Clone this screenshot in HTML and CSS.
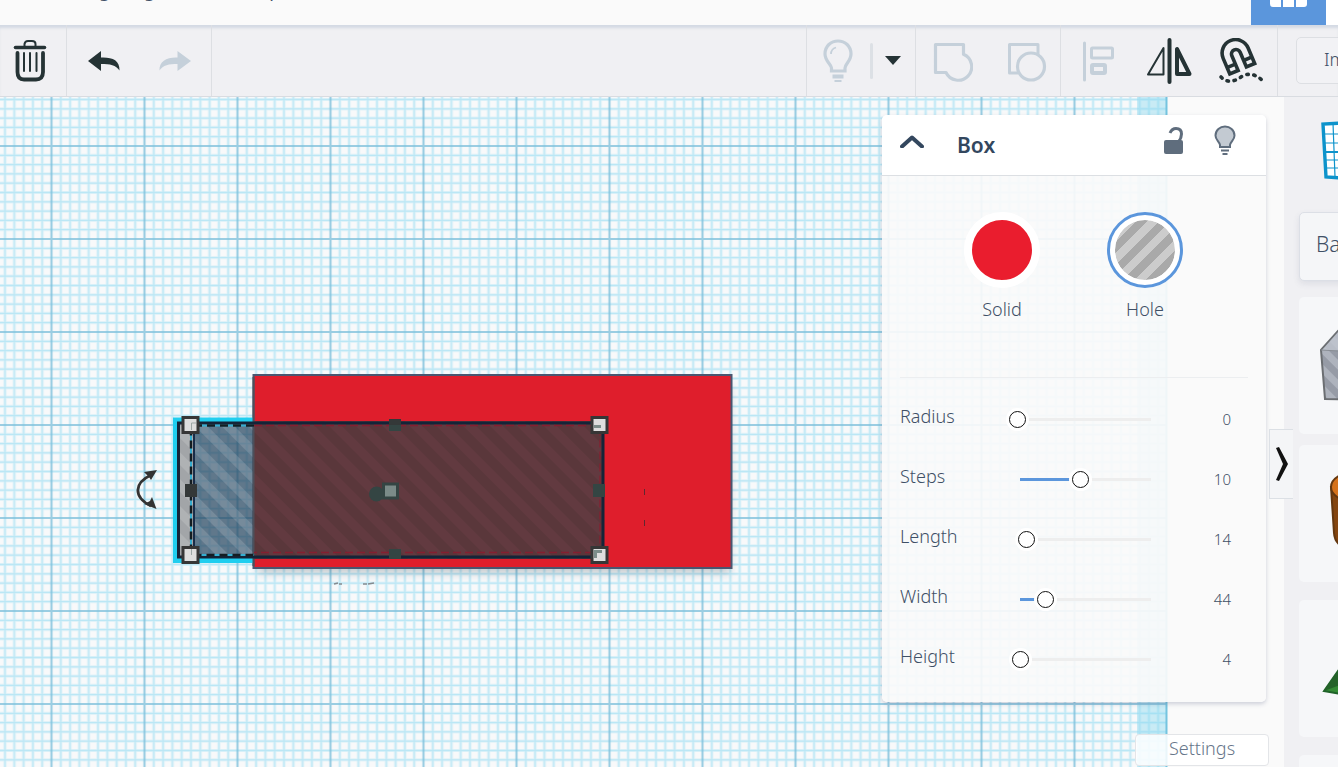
FILE: index.html
```html
<!DOCTYPE html>
<html lang="en">
<head>
<meta charset="utf-8">
<title>3D design editor</title>
<link rel="stylesheet" href="styles.css">
</head>
<body>
<div class="app">
  <header class="topbar">
    <div class="project"><span>g</span><span>g</span><span>p</span></div>
    <button class="view-tab" aria-label="Blocks view"><svg width="38" height="24" viewBox="0 0 38 24"><path d="M0 0H11V23H3Q0 23 0 20ZM13 0H24V23H13ZM26 0H37V20Q37 23 34 23H26Z" fill="#fff"/></svg></button>
    <div class="topbar-end"></div>
  </header>

  <div class="toolbar">
    <div class="group group-trash">
      <button class="tool" aria-label="Delete"><svg width="34" height="44" viewBox="0 0 34 44" fill="none" stroke="#253335" stroke-linecap="round"><path d="M2.500 8.500H31.500" stroke-width="3.600"/><path d="M11.500 7V5Q12 2 15 2H19Q22.500 2 22.500 5V7" stroke-width="2"/><path d="M4.500 14V33Q4.500 40.500 11 40.500H23Q30 40.500 30 33V14" stroke-width="3.800"/><path d="M11 14V32M17 14V32M23.500 14V32" stroke-width="2"/></svg></button>
    </div>
    <div class="group group-history">
      <button class="tool" aria-label="Undo"><svg width="34" height="22" viewBox="0 0 34 22"><path d="M1 11L14 1V7.500C25 7 33 10 32.500 20.500C29 15 23 14 14 14V21Z" fill="#253335"/></svg></button>
      <button class="tool" aria-label="Redo"><svg width="34" height="22" viewBox="0 0 34 22"><path d="M33 11L19.500 1V7.500C9 7 1 11 1.500 20.500C5 15 11 14 19.500 14V21Z" fill="#c5d0da"/></svg></button>
    </div>
    <div class="group group-show">
      <button class="tool" aria-label="Show all"><svg width="30" height="44" viewBox="0 0 30 44" fill="none" stroke="#c5d0da"><path d="M8.500 32V29C8 25 2 22 2 15C2 7 8 2 15 2S28 7 28 15C28 22 22 25 22 29V32Z" stroke-width="3.200"/><path d="M8 15Q8 10 13 8.500" stroke-width="1.800"/><path d="M9.500 37.500H20.500" stroke-width="4"/><path d="M11.500 42H18.500" stroke-width="2"/></svg></button>
      <span class="divider"></span>
      <button class="tool" aria-label="Visibility options"><svg width="16" height="9" viewBox="0 0 16 9"><path d="M0 0H16L8 9Z" fill="#253335"/></svg></button>
    </div>
    <div class="group group-combine">
      <button class="tool" aria-label="Group"><svg width="40" height="40" viewBox="0 0 40 40" fill="none" stroke="#c5d0da" stroke-width="3.200"><path d="M2.500 2.500H30.500V12.300A13.500 13.500 0 1 1 13 30.500H2.500Z" stroke-linejoin="round"/></svg></button>
      <button class="tool" aria-label="Ungroup"><svg width="40" height="40" viewBox="0 0 40 40" fill="none" stroke="#c5d0da"><path d="M11 31H2.500V2.500H31V13" stroke-width="3" stroke-linejoin="round"/><circle cx="24" cy="24.500" r="13.500" stroke-width="3.200"/></svg></button>
    </div>
    <div class="group group-arrange">
      <button class="tool" aria-label="Align"><svg width="32" height="42" viewBox="0 0 32 42" fill="none" stroke="#c5d0da"><path d="M2.500 3V40" stroke-width="3" stroke-linecap="round"/><rect x="9.500" y="8" width="21" height="10" stroke-width="3" rx="1"/><rect x="10" y="25" width="13" height="8" stroke-width="4" rx="1"/></svg></button>
      <button class="tool" aria-label="Mirror"><svg width="46" height="48" viewBox="0 0 46 48" fill="none" stroke="#253335" stroke-linejoin="round"><path d="M17.500 11V37.500H2Z" stroke-width="2"/><path d="M23.500 3V45" stroke-width="4" stroke-linecap="round"/><path d="M31 12V37H43.500Z" stroke-width="4"/></svg></button>
      <button class="tool" aria-label="Snap"><svg width="46" height="46" viewBox="0 0 46 46" fill="none" stroke="#253335"><g transform="rotate(-23 18 16)" stroke-width="3.600"><path d="M4.500 32V15A13.500 13.500 0 0 1 31.500 15V32H22.500V16A4.500 4.500 0 0 0 13.500 16V32Z"/><path d="M5 25H13.500M22.500 25H31"/></g><path d="M3 39C10 46 17 43 23 39S36 35 44 42" stroke-width="3.600" stroke-linecap="round" stroke-dasharray="1.500 5.600"/></svg></button>
    </div>
    <div class="group group-import"><button class="import">Import</button></div>
  </div>

  <main class="main">
    <section class="workspace">
      <svg class="canvas" aria-label="Workplane">
        <defs>
          <pattern id="grid" x="51.500" y="49" width="93" height="93" patternUnits="userSpaceOnUse">
            <g stroke="#89d9f2" stroke-opacity=".2" stroke-width="3.200"><path id="minor" d="M9.300 0V93M18.600 0V93M27.900 0V93M37.200 0V93M46.500 0V93M55.800 0V93M65.100 0V93M74.400 0V93M83.700 0V93M0 9.300H93M0 18.600H93M0 27.900H93M0 37.200H93M0 46.500H93M0 55.800H93M0 65.100H93M0 74.400H93M0 83.700H93"/></g>
            <g stroke="#8cdaf2" stroke-opacity=".45" stroke-width="1.300"><path d="M9.300 0V93M18.600 0V93M27.900 0V93M37.200 0V93M46.500 0V93M55.800 0V93M65.100 0V93M74.400 0V93M83.700 0V93M0 9.300H93M0 18.600H93M0 27.900H93M0 37.200H93M0 46.500H93M0 55.800H93M0 65.100H93M0 74.400H93M0 83.700H93"/></g>
            <path d="M0 0V93M93 0V93M0 0H93M0 93H93" stroke="#82c2dc" stroke-width="2.200" stroke-opacity=".8"/>
          </pattern>
          <pattern id="hole" width="19" height="19" patternUnits="userSpaceOnUse" patternTransform="rotate(-45)"><rect width="9" height="19" fill="#fff" fill-opacity=".14"/></pattern>
          <pattern id="holeDark" width="19" height="19" patternUnits="userSpaceOnUse" patternTransform="rotate(-45)"><rect width="9" height="19" fill="#623a40"/></pattern>
          <filter id="soft" x="-10%" y="-10%" width="120%" height="130%"><feGaussianBlur stdDeviation="5"/></filter>
        </defs>
        <rect width="1167" height="100%" fill="#f8f9fa"/>
        <rect x="1137" width="30" height="100%" fill="#c9ebf5"/>
        <rect width="1167" height="100%" fill="url(#grid)"/>
        <path d="M1166.500 0V700" stroke="#75c4df" stroke-width="2"/>
        <rect x="258" y="288" width="472" height="188" fill="#345" opacity=".28" filter="url(#soft)"/>
        <rect x="253.500" y="278" width="478" height="193" fill="#df1e2c" stroke="#4a5670" stroke-width="2"/>
        <path d="M253 323H175.500V463.500H253" fill="none" stroke="#20ceef" stroke-width="5"/>
        <rect x="178" y="325" width="16" height="136" fill="#a2a5a8"/>
        <rect x="194" y="325" width="60" height="136" fill="#254560" fill-opacity=".72"/>
        <rect x="178" y="325" width="76" height="136" fill="url(#hole)"/>
        <rect x="254" y="324" width="349" height="138" fill="#5a373b"/>
        <rect x="254" y="324" width="349" height="138" fill="url(#holeDark)"/>
        <path d="M253.500 280V469" stroke="#4d505b" stroke-width="2"/>
        <rect x="178.500" y="326" width="424.500" height="134" fill="none" stroke="#152438" stroke-width="3"/>
        <path d="M194 327V459" stroke="#182c48" stroke-width="2"/>
        <path d="M254 328.500H191V458H254" fill="none" stroke="#35add0" stroke-width="2"/>
        <path d="M254 328.500H191V458H254" fill="none" stroke="#141d22" stroke-width="2.500" stroke-dasharray="8 5"/>
        <path d="M254 328.500H600V455.500H254" fill="none" stroke="#851f30" stroke-width="1.300" stroke-dasharray="8 4"/>
        <g fill="#dedede" stroke="#363636" stroke-width="3"><rect x="183" y="320.500" width="15" height="15"/><rect x="183" y="450.500" width="15" height="15"/><rect x="592" y="320.500" width="15" height="15"/><rect x="592" y="450.500" width="15" height="15"/></g>
        <path d="M191.500 333V326H196M191.500 452V458" fill="none" stroke="#9da7a6"/>
        <path d="M594 328H601V331H594ZM594 453H602V456H597V461H594Z" fill="#7c8d8a"/>
        <path d="M185 387H197V400H185ZM389 322H401V328H389Z" fill="#343838"/>
        <path d="M389 328H401V334H389ZM389 452H401V462H389ZM593 387H605V400H593Z" fill="#344543"/>
        <circle cx="376.500" cy="397" r="7.500" fill="#344543"/><rect x="383.500" y="387" width="14" height="14" fill="#7b8b88" stroke="#344543" stroke-width="3"/>
        <path d="M151 378C134 386 133 400 151 409" fill="none" stroke="#333" stroke-width="2.800"/><path d="M144 375L157 373L151 383L149 380ZM144 407L150 404L152 400L156.500 412Z" fill="#333"/>
        <path d="M644.500 392V398M644.500 423V429" stroke="#602831"/>
        <path d="M334 487L338 486M339 487H342M363 487H367M368 487L374 486" stroke="#858b90" stroke-width="1.500"/>
      </svg>

      <aside class="inspector">
        <div class="inspector-head">
          <button class="tool" aria-label="Collapse"><svg width="24" height="14" viewBox="0 0 24 14"><path d="M2 12.500L12 3.500L22 12.500" fill="none" stroke="#33475e" stroke-width="4" stroke-linecap="round" stroke-linejoin="round"/></svg></button>
          <h2 class="inspector-title">Box</h2>
          <button class="tool" aria-label="Lock"><svg width="20" height="28" viewBox="0 0 20 28"><rect y="13" width="19" height="14" rx="2" fill="#5f6d7d"/><path d="M6 6Q8 1.500 12 1.500Q17.500 1.500 17.500 7Q17.500 11 14.500 15" fill="none" stroke="#5f6d7d" stroke-width="3"/></svg></button>
          <button class="tool" aria-label="Hide"><svg width="22" height="31" viewBox="0 0 22 31"><path d="M6 22V20C5 16 1.500 15 1.500 10.500C1.500 5 6 1.500 11 1.500S20.500 5 20.500 10.500C20.500 15 17 16 16 20V22Z" fill="#c3cad2" stroke="#5f6d7d" stroke-width="2"/><path d="M7 25.500H15M8.500 29H13.500" stroke="#5f6d7d" stroke-width="2"/></svg></button>
        </div>
        <div class="materials">
          <button class="material"><span class="swatch solid"></span>Solid</button>
          <button class="material"><span class="swatch hole selected"></span>Hole</button>
        </div>
        <div class="params">
          <div class="param"><label for="radius">Radius</label><input class="range" id="radius" type="range" min="0" max="100" value="0" style="--fill:0px"><output for="radius">0</output></div>
          <div class="param"><label for="steps">Steps</label><input class="range" id="steps" type="range" min="0" max="100" value="50" style="--fill:58px"><output for="steps">10</output></div>
          <div class="param"><label for="length">Length</label><input class="range" id="length" type="range" min="0" max="100" value="7" style="--fill:0px"><output for="length">14</output></div>
          <div class="param"><label for="width">Width</label><input class="range" id="width" type="range" min="0" max="100" value="22" style="--fill:24px"><output for="width">44</output></div>
          <div class="param"><label for="height">Height</label><input class="range" id="height" type="range" min="0" max="100" value="2" style="--fill:0px"><output for="height">4</output></div>
        </div>
      </aside>
      <button class="settings">Settings</button>
      <button class="drawer" aria-label="Toggle shapes panel"><svg width="12" height="34" viewBox="0 0 12 34"><path d="M0 1L3 0L12 17L3 34L0 33L7 17Z" fill="#111"/></svg></button>
    </section>

    <nav class="shapes">
      <button class="workplane" aria-label="Workplane"><svg width="60" height="62" viewBox="0 0 60 62" fill="none" stroke="#0d93cb"><path d="M58 0L2 3L5 56L58 59Z" fill="#fff" stroke-width="3.400"/><path d="M12 2L14 56M4 13H58M4 22H58M4 39H58M4 47H58" stroke-width="1.200"/><path d="M4 31H58" stroke-width="2"/></svg></button>
      <button class="category">Basic</button>
      <button class="shape-card" aria-label="Box hole"><svg width="80" height="90" viewBox="0 0 80 90"><defs><pattern id="stripe" width="14" height="14" patternUnits="userSpaceOnUse" patternTransform="rotate(-45)"><rect width="14" height="14" fill="#aeb3bd"/><rect width="7" height="14" fill="#969ba6"/></pattern></defs><path d="M2 29L28 0L78 9V80L6 78Z" fill="url(#stripe)" stroke="#6b6e72" stroke-width="2"/><path d="M3 29L28 1L78 9L70 31Z" fill="#c1c6d0" fill-opacity=".8"/><path d="M2 29L70 33" stroke="#888d94"/></svg></button>
      <button class="shape-card" aria-label="Cylinder"><svg width="80" height="90" viewBox="0 0 80 90"><path d="M12 18L15 64Q16 82 45 82T75 64V18Z" fill="#84450f" stroke="#63370f" stroke-width="2"/><ellipse cx="44" cy="18" rx="32" ry="17" fill="#d5721b" stroke="#63370f" stroke-width="2"/></svg></button>
      <button class="shape-card" aria-label="Pyramid"><svg width="80" height="90" viewBox="0 0 80 90"><path d="M5 67L42 14L76 72L38 73Z" fill="#348b35" stroke="#20632a" stroke-width="2"/><path d="M5 67L42 14L24 60Z" fill="#246329"/></svg></button>
      <button class="shape-card" aria-label="More shapes"></button>
    </nav>
  </main>
</div>
</body>
</html>
```
FILE: styles.css
```css
* { box-sizing: border-box; }
body { margin: 0; font-family: "Noto Sans", sans-serif; font-weight: 300; color: #3f5066; background: #fafafa; }
button { font: inherit; color: inherit; background: none; border: 0; padding: 0; cursor: pointer; }
svg { display: block; flex: none; }
.app { display: flex; flex-direction: column; height: 100vh; overflow: hidden; }

.topbar { display: flex; flex: none; height: 25px; overflow: hidden; background: #fafafa; }
.project { display: flex; flex: 1; gap: 34px; padding-left: 99px; font-size: 18px; line-height: 24px; margin-top: -22px; font-weight: 400; }
.project span:last-child { margin-left: 80px; }
.view-tab { display: flex; align-items: flex-start; justify-content: center; width: 75px; background: #5b96dc; overflow: hidden; }
.view-tab svg { margin-top: -16px; }
.topbar-end { width: 12px; background: #fff; }

.toolbar { display: flex; flex: none; height: 72px; background: #f0f0f3; border-bottom: 1px solid #d9dce1; box-shadow: inset 0 4px 3px -1px #d3d9e3; overflow: hidden; }
.group { display: flex; align-items: center; flex: none; border-right: 1px solid #dddfe3; }
.tool { display: flex; align-items: center; }
.group-trash { width: 67px; padding-left: 13px; }
.group-history { width: 145px; gap: 37px; padding-left: 20px; }
.group-show { margin-left: auto; width: 110px; border-left: 1px solid #dddfe3; padding-left: 16px; gap: 17px; }
.divider { width: 3px; height: 36px; border-radius: 2px; background: #dce0e5; }
.group-show .tool:last-child { margin-left: -5px; }
.group-combine { width: 145px; padding: 2px 0 0 17px; gap: 34px; }
.group-arrange { width: 217px; padding-left: 21px; gap: 32px; }
.group-arrange .tool:last-child { margin-left: -6px; }
.group-import { width: 60px; border-right: 0; padding-left: 18px; }
.import { flex: none; width: 110px; height: 47px; padding: 0 0 4px 27px; text-align: left; font-size: 18px; border: 1px solid #dddfe3; border-radius: 5px; background: #f2f2f5; }

.main { display: flex; flex: 1; min-height: 0; }
.workspace { position: relative; flex: 1; min-width: 0; background: #fafafa; }
.canvas { position: absolute; inset: 0; width: 100%; height: 100%; }

.inspector { position: absolute; top: 18px; right: 18px; width: 384px; border-radius: 5px; background: rgba(250, 250, 250, .92); box-shadow: 0 2px 4px rgba(70, 80, 120, .25); }
.inspector-head { display: flex; align-items: center; height: 61px; padding: 0 30px 9px 18px; background: #fff; border-bottom: 1px solid #dcdfe3; border-radius: 5px 5px 0 0; gap: 30px; }
.inspector-title { flex: 1; margin: 0; padding: 8px 0 0 3px; font-size: 21px; line-height: 28px; font-weight: 600; color: #33475e; }
.materials { display: flex; gap: 67px; height: 201px; padding: 36px 0 0 82px; }
.material { display: flex; flex-direction: column; align-items: center; gap: 7px; width: 76px; font-size: 18px; line-height: 28px; }
.swatch { width: 76px; height: 76px; border-radius: 50%; border: 8px solid #fff; background: #ea1d2e; }
.swatch.hole { background: repeating-linear-gradient(135deg, #a9a9a9 0 8px, #ccc 8px 16px) padding-box, #fff; }
.swatch.selected { outline: 3px solid #5b96dc; outline-offset: -3px; }
.params { margin: 0 18px; padding: 9px 17px 15px 0; border-top: 1px solid #eceef0; }
.param { display: flex; align-items: center; height: 60px; font-size: 18px; }
.param label { width: 109px; padding-bottom: 2px; }
.param output { flex: 1; text-align: right; font-size: 15px; padding-top: 4px; }
.range { appearance: none; width: 142px; height: 24px; margin: 4px 0 0; background: linear-gradient(#5b96dc, #5b96dc) 11px 50% / var(--fill) 3px no-repeat, linear-gradient(#eee, #eee) 11px 50% / 131px 3px no-repeat; }
.range::-webkit-slider-thumb { appearance: none; width: 17px; height: 17px; border: 1px solid #111; border-radius: 50%; background: #fff; box-shadow: 0 0 0 3px #fff; }
.settings { position: absolute; right: 15px; bottom: 1px; width: 134px; height: 32px; padding-bottom: 4px; font-size: 18px; line-height: 26px; color: #67768a; background: rgba(255, 255, 255, .85); border: 1px solid #e3e5e8; border-radius: 4px; }
.drawer { position: absolute; z-index: 1; top: 332px; right: -9px; width: 24px; height: 70px; padding-left: 6px; background: #f4f5f7; border: 1px solid #dce0e5; border-right: 0; }

.shapes { display: flex; flex-direction: column; flex: none; width: 54px; padding: 24px 0 0 15px; background: #f0f0f3; overflow: hidden; }
.workplane { flex: none; align-self: flex-start; margin-left: 22px; height: 62px; }
.category { flex: none; width: 220px; height: 69px; margin: 29px 0 16px; padding: 0 0 5px 16px; text-align: left; font-size: 21px; background: #f5f6f8; border: 1px solid #dcdfe6; border-radius: 5px; box-shadow: 0 3px 6px rgba(80, 90, 120, .12); }
.shape-card { display: flex; align-items: center; flex: none; width: 137px; height: 137px; margin-bottom: 11px; padding-left: 20px; background: #f6f7f9; border-radius: 5px; }
.shape-card + .shape-card { margin-bottom: 18px; }
```
